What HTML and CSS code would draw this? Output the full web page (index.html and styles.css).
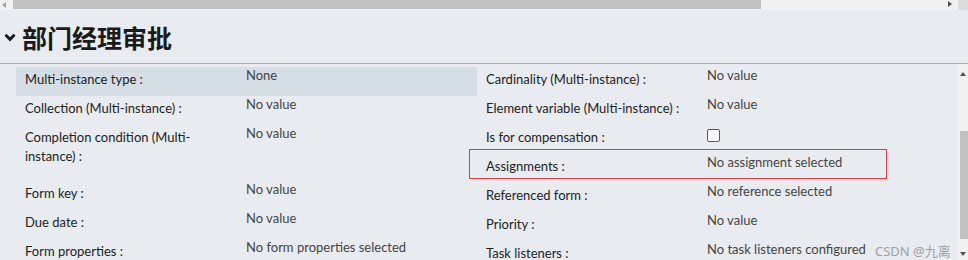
FILE: index.html
```html
<!DOCTYPE html>
<html>
<head>
<meta charset="utf-8">
<link rel="stylesheet" href="styles.css">
</head>
<body>
<div class="hscroll">
  <div class="harrow"><svg width="4" height="6" viewBox="0 0 4 6"><path d="M4 0V6L0 3Z" fill="#a3a3a3"/></svg></div>
  <div class="hthumb"></div>
  <div class="htrack"><svg width="4" height="6" viewBox="0 0 4 6"><path d="M0 0V6L4 3Z" fill="#505050"/></svg></div>
  <div class="corner"></div>
</div>
<div class="header">
  <svg class="chev" width="12" height="9" viewBox="0 0 12 9"><path d="M1.5 1.8L6 6.3L10.5 1.8" fill="none" stroke="#1a1a1a" stroke-width="3"/></svg>
  <h1 class="title">部门经理审批</h1>
</div>
<div class="main">
  <div class="content">
    <div class="col">
      <div class="row hl"><div class="label">Multi-instance type :</div><div class="value">None</div></div>
      <div class="row"><div class="label">Collection (Multi-instance) :</div><div class="value">No value</div></div>
      <div class="row tall"><div class="label">Completion condition (Multi-instance) :</div><div class="value">No value</div></div>
      <div class="row"><div class="label">Form key :</div><div class="value">No value</div></div>
      <div class="row"><div class="label">Due date :</div><div class="value">No value</div></div>
      <div class="row"><div class="label">Form properties :</div><div class="value">No form properties selected</div></div>
    </div>
    <div class="col">
      <div class="row"><div class="label">Cardinality (Multi-instance) :</div><div class="value">No value</div></div>
      <div class="row"><div class="label">Element variable (Multi-instance) :</div><div class="value">No value</div></div>
      <div class="row"><div class="label">Is for compensation :</div><div class="value"><span class="checkbox"></span></div></div>
      <div class="row marked"><div class="label">Assignments :</div><div class="value">No assignment selected</div><div class="redbox"></div></div>
      <div class="row"><div class="label">Referenced form :</div><div class="value">No reference selected</div></div>
      <div class="row"><div class="label">Priority :</div><div class="value">No value</div></div>
      <div class="row"><div class="label">Task listeners :</div><div class="value">No task listeners configured</div></div>
    </div>
    <div class="watermark">CSDN @九离</div>
  </div>
  <div class="vscroll">
    <svg class="varrow" width="6" height="4" viewBox="0 0 6 4"><path d="M0 4H6L3 0Z" fill="#505050"/></svg>
    <div class="vgap1"></div>
    <div class="vthumb"></div>
    <div class="vgap2"></div>
    <svg class="varrow" width="6" height="4" viewBox="0 0 6 4"><path d="M0 0H6L3 4Z" fill="#505050"/></svg>
  </div>
</div>
</body>
</html>
```

FILE: styles.css
```css
html, body {
  margin: 0;
  padding: 0;
}
body {
  width: 968px;
  height: 260px;
  overflow: hidden;
  background: #e8ecf0;
  font-family: Lato, "Noto Sans", sans-serif;
  font-size: 13px;
}
.hscroll {
  display: flex;
  height: 10px;
  background: #f1f1f1;
}
.harrow {
  width: 13px;
  display: flex;
  align-items: center;
  padding-left: 2px;
  box-sizing: border-box;
}
.hthumb {
  width: 748px;
  height: 9px;
  background: #c1c1c1;
}
.htrack {
  flex: 1;
  display: flex;
  align-items: flex-start;
  justify-content: flex-end;
  padding: 1px 6px 0 0;
}
.corner {
  width: 10px;
  background: #dcdcdc;
}
.header {
  display: flex;
  align-items: center;
  border-bottom: 1px solid #a9b0bb;
  box-sizing: border-box;
  height: 54px;
}
.chev {
  margin: 2px 0 0 4px;
}
.title {
  margin: 0 0 0 6px;
  font-family: "Noto Sans CJK SC", sans-serif;
  font-weight: 700;
  font-size: 25px;
  color: #1a1a1a;
  line-height: 30px;
}
.main {
  display: flex;
  height: 196px;
}
.content {
  flex: 1;
  position: relative;
  display: flex;
  padding: 3px 0 0 16px;
}
.col {
  width: 461px;
  display: flex;
  flex-direction: column;
}
.row {
  display: flex;
  height: 29px;
  flex-shrink: 0;
  position: relative;
}
.row.tall {
  height: 56px;
}
.row.hl {
  background: #d5dde5;
}
.label {
  width: 230px;
  box-sizing: border-box;
  padding: 3px 20px 0 9px;
  color: #222;
  line-height: 19px;
}
.value {
  flex: 1;
  color: #444;
  line-height: 19px;
  margin-top: -1px;
}
.checkbox {
  display: block;
  width: 11px;
  height: 11px;
  margin-top: 5px;
  border: 1px solid #5a5a5a;
  border-radius: 2px;
  background: #fff;
}
.redbox {
  position: absolute;
  left: -8px;
  top: -5px;
  width: 418px;
  height: 30px;
  border: 1px solid #e53a3a;
  box-sizing: border-box;
}
.watermark {
  position: absolute;
  left: 875px;
  top: 177px;
  font-family: "Noto Sans", "Noto Sans CJK SC", sans-serif;
  font-size: 13px;
  color: #a0a0a0;
  white-space: nowrap;
}
.vscroll {
  width: 10px;
  background: #f1f1f1;
  display: flex;
  flex-direction: column;
  align-items: flex-end;
}
.varrow {
  margin: 8px 2px 0 0;
  flex-shrink: 0;
}
.vgap1 {
  height: 55px;
}
.vthumb {
  width: 8px;
  height: 108px;
  background: #c1c1c1;
}
.vgap2 {
  flex: 1;
}
.vscroll .varrow:last-child {
  margin: 0 2px 4px 0;
}
```
